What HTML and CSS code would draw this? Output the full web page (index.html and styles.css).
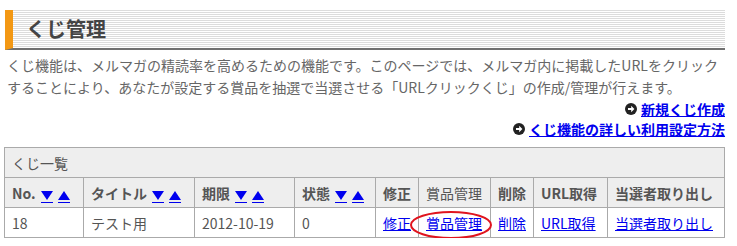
FILE: index.html
```html
<!doctype html>
<html lang="ja">
<head>
	<meta charset="UTF-8" />
	<title>くじ管理</title>
	<link rel="stylesheet" href="styles.css">
</head>
<body>
    <!--外枠-->
    <div class="wrap">
        <h2 class="ttl">くじ管理</h2>
        <p class="lead">くじ機能は、メルマガの精読率を高めるための機能です。このページでは、メルマガ内に掲載したURLをクリックすることにより、あなたが設定する賞品を抽選で当選させる「URLクリックくじ」の作成/管理が行えます。</p>
        <!--右寄せリンク-->
        <ul class="links">
            <li><svg class="ico" viewBox="0 0 12 12"><circle cx="6" cy="6" r="6" fill="#222"/><path d="M3 5h3.2V2.8L9.4 6 6.2 9.2V7H3z" fill="#fff"/></svg><a href="#">新規くじ作成</a></li>
            <li><svg class="ico" viewBox="0 0 12 12"><circle cx="6" cy="6" r="6" fill="#222"/><path d="M3 5h3.2V2.8L9.4 6 6.2 9.2V7H3z" fill="#fff"/></svg><a href="#">くじ機能の詳しい利用設定方法</a></li>
        </ul>
        <!--一覧-->
        <table class="list">
            <colgroup>
                <col style="width:79px"><col style="width:111px"><col style="width:100px"><col style="width:81px"><col style="width:43px"><col style="width:72px"><col style="width:43px"><col style="width:74px"><col style="width:117px">
            </colgroup>
            <tr><td class="cap" colspan="9">くじ一覧</td></tr>
            <tr>
                <th>No.<a class="sort" href="#" title="▼"><svg viewBox="0 0 12 9"><path d="M0 0h12L6 9z"/></svg></a><a class="sort" href="#" title="▲"><svg viewBox="0 0 12 9"><path d="M0 9h12L6 0z"/></svg></a></th>
                <th>タイトル<a class="sort" href="#" title="▼"><svg viewBox="0 0 12 9"><path d="M0 0h12L6 9z"/></svg></a><a class="sort" href="#" title="▲"><svg viewBox="0 0 12 9"><path d="M0 9h12L6 0z"/></svg></a></th>
                <th>期限<a class="sort" href="#" title="▼"><svg viewBox="0 0 12 9"><path d="M0 0h12L6 9z"/></svg></a><a class="sort" href="#" title="▲"><svg viewBox="0 0 12 9"><path d="M0 9h12L6 0z"/></svg></a></th>
                <th>状態<a class="sort" href="#" title="▼"><svg viewBox="0 0 12 9"><path d="M0 0h12L6 9z"/></svg></a><a class="sort" href="#" title="▲"><svg viewBox="0 0 12 9"><path d="M0 9h12L6 0z"/></svg></a></th>
                <th>修正</th>
                <th class="norm">賞品管理</th>
                <th>削除</th>
                <th>URL取得</th>
                <th>当選者取り出し</th>
            </tr>
            <tr>
                <td>18</td>
                <td>テスト用</td>
                <td>2012-10-19</td>
                <td>0</td>
                <td><a href="#">修正</a></td>
                <td><a href="#">賞品管理</a></td>
                <td><a href="#">削除</a></td>
                <td><a href="#">URL取得</a></td>
                <td><a href="#">当選者取り出し</a></td>
            </tr>
        </table>
        <!--赤丸-->
        <svg class="mark" viewBox="0 0 84 30"><ellipse cx="42" cy="15" rx="40" ry="13" fill="none" stroke="#e0141e" stroke-width="2"/></svg>
    </div>
</body>
</html>
```

FILE: styles.css
```css
* {
    padding: 0;
    margin: 0;
    list-style: none;
    border: 0;
}

body {
    font-family: "Noto Sans CJK JP", sans-serif;
    font-size: 14px;
    color: #555;
    background: #fff;
}

a {
    color: #0000ee;
}

.wrap {
    position: relative;
    width: 721px;
    padding: 10px 0 0 4px;
}

.ttl {
    margin-left: 1px;
    height: 38px;
    line-height: 38px;
    padding-left: 13px;
    border-left: 8px solid #f39814;
    border-bottom: 2px solid #707070;
    background: repeating-linear-gradient(#dcdcdc 0, #dcdcdc 1px, #fff 1px, #fff 2px);
    font-size: 20px;
    font-weight: bold;
    color: #444;
}

.lead {
    margin-top: 4px;
    padding: 0 0 0 3px;
    line-height: 22px;
    color: #666;
}

.links {
    margin-top: 1px;
    text-align: right;
    line-height: 20px;
}

.links li {
    display: flex;
    justify-content: flex-end;
    align-items: center;
    gap: 4px;
}

.links a {
    font-weight: bold;
}

.ico {
    width: 12px;
    height: 12px;
}

.list {
    margin-top: 8px;
    width: 721px;
    table-layout: fixed;
    border-collapse: collapse;
}

.list td,
.list th {
    height: 29px;
    padding: 0 7px;
    border: 1px solid #aaa;
    text-align: left;
    white-space: nowrap;
    font-weight: normal;
    line-height: 20px;
}

.list th {
    background: #eee;
    font-weight: bold;
}

.list th.norm {
    font-weight: normal;
}

.list .sort {
    display: inline-block;
    margin-left: 5px;
    padding-bottom: 2px;
    border-bottom: 1px solid #0000ee;
    line-height: 0;
    vertical-align: -1px;
}

.list .sort svg {
    width: 12px;
    height: 9px;
    fill: #0000ee;
}

.list .cap {
    background: #eee;
}

.mark {
    position: absolute;
    left: 409px;
    top: 210px;
    width: 84px;
    height: 30px;
}
```
